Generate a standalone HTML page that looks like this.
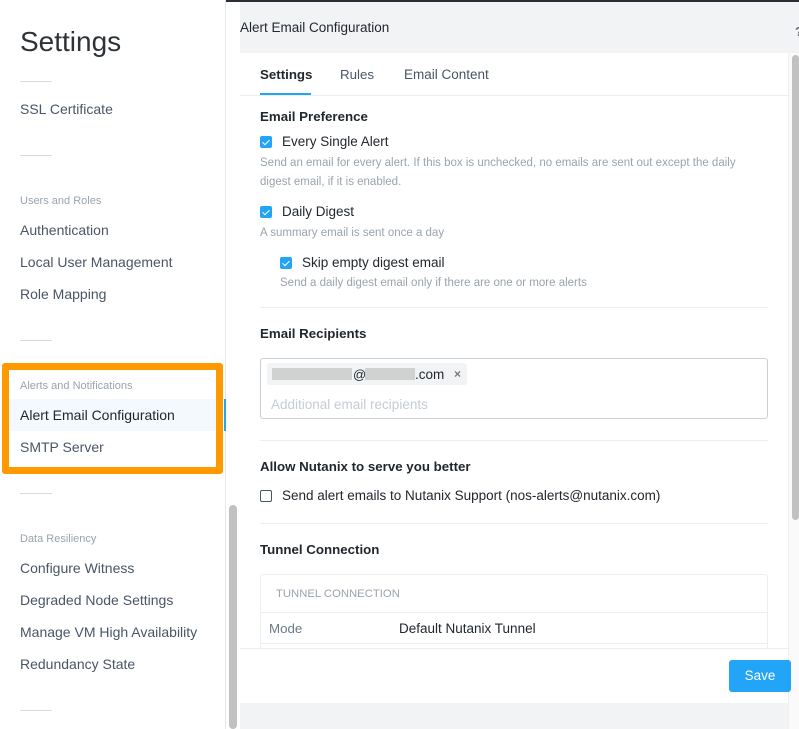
<!DOCTYPE html>
<html><head><style>
*{margin:0;padding:0;box-sizing:border-box}
body{width:799px;height:729px;overflow:hidden;font-family:"Liberation Sans",sans-serif;background:#f2f3f5;position:relative;color:#22272e}
.a{position:absolute;white-space:nowrap}
.side{position:absolute;left:0;top:0;width:226px;height:729px;background:#fff;border-right:1px solid #e6e8eb}
.nav{font-size:14px;color:#4a5565}
.grp{font-size:11px;color:#9aa3ae}
.hr{position:absolute;left:20px;width:32px;height:1px;background:#d7dbe0}
.cb{position:absolute;width:12px;height:12px;border-radius:2px;background:#22a5f7}
.cb:after{content:"";position:absolute;left:4px;top:1.5px;width:3px;height:6px;border:solid #fff;border-width:0 1.6px 1.6px 0;transform:rotate(45deg)}
.t14{font-size:13.5px;color:#22272e}
.h{font-size:13.3px;font-weight:bold;color:#22272e}
.s{font-size:11.5px;color:#9aa3ae}
.line{position:absolute;left:260px;width:508px;height:1px;background:#eceef1}
</style></head><body>
<div class="a" style="left:0;top:0;width:799px;height:2px;background:#2a2f36"></div>
<div class="side">
<div class="a" style="left:20px;top:26px;font-size:28px;color:#2e3338">Settings</div>
<div class="hr" style="top:81px"></div>
<div class="a nav" style="left:20px;top:101px">SSL Certificate</div>
<div class="hr" style="top:155px"></div>
<div class="a grp" style="left:20px;top:195px">Users and Roles</div>
<div class="a nav" style="left:20px;top:222px">Authentication</div>
<div class="a nav" style="left:20px;top:254px">Local User Management</div>
<div class="a nav" style="left:20px;top:286px">Role Mapping</div>
<div class="hr" style="top:340px"></div>
<div class="a" style="left:9px;top:399px;width:216px;height:32px;background:#f3f9fd"></div>
<div class="a" style="left:224px;top:399px;width:2px;height:32px;background:#22a5f7"></div>
<div class="a grp" style="left:20px;top:380px">Alerts and Notifications</div>
<div class="a nav" style="left:20px;top:407px;color:#22272e">Alert Email Configuration</div>
<div class="a nav" style="left:20px;top:439px">SMTP Server</div>
<div class="a" style="left:2px;top:363px;width:221px;height:111px;border:7px solid #ff9900;border-radius:3px"></div>
<div class="hr" style="top:493px"></div>
<div class="a grp" style="left:20px;top:533px">Data Resiliency</div>
<div class="a nav" style="left:20px;top:560px">Configure Witness</div>
<div class="a nav" style="left:20px;top:592px">Degraded Node Settings</div>
<div class="a nav" style="left:20px;top:624px">Manage VM High Availability</div>
<div class="a nav" style="left:20px;top:656px">Redundancy State</div>
<div class="hr" style="top:710px"></div>
</div>
<div class="a" style="left:226px;top:2px;width:14px;height:727px;background:#fff"></div>
<div class="a" style="left:229px;top:505px;width:8px;height:224px;background:#c1c1c1;border-radius:4px"></div>
<div class="a" style="left:240px;top:20px;font-size:13.5px;color:#22272e">Alert Email Configuration</div>
<div class="a" style="left:795px;top:24px;font-size:13px;color:#5a6b80;font-weight:bold">?</div>
<div class="a" style="left:240px;top:53px;width:548px;height:650px;background:#fff;border-radius:0 0 3px 3px"></div>
<div class="a" style="left:788px;top:53px;width:11px;height:676px;background:#fafafa;border-left:1px solid #eee"></div>
<div class="a" style="left:792px;top:55px;width:7px;height:465px;background:#c1c1c1;border-radius:4px"></div>
<div class="a" style="left:260px;top:67px;font-size:13.3px;font-weight:bold;color:#22272e">Settings</div>
<div class="a" style="left:260px;top:93px;width:51px;height:2px;background:#22a5f7"></div>
<div class="a" style="left:340px;top:67px;font-size:13.3px;color:#4a5565">Rules</div>
<div class="a" style="left:404px;top:67px;font-size:13.5px;color:#4a5565">Email Content</div>
<div class="a" style="left:240px;top:95px;width:548px;height:1px;background:#eceef1"></div>
<div class="a h" style="left:260px;top:109px">Email Preference</div>
<div class="cb" style="left:260px;top:136px"></div>
<div class="a t14" style="left:282px;top:134px">Every Single Alert</div>
<div class="a s" style="left:260px;top:157px">Send an email for every alert. If this box is unchecked, no emails are sent out except the daily</div>
<div class="a s" style="left:260px;top:176px">digest email, if it is enabled.</div>
<div class="cb" style="left:260px;top:206px"></div>
<div class="a t14" style="left:282px;top:204px">Daily Digest</div>
<div class="a s" style="left:260px;top:227px">A summary email is sent once a day</div>
<div class="cb" style="left:280px;top:257px"></div>
<div class="a t14" style="left:302px;top:255px">Skip empty digest email</div>
<div class="a s" style="left:280px;top:277px">Send a daily digest email only if there are one or more alerts</div>
<div class="line" style="top:307px"></div>
<div class="a h" style="left:260px;top:326px">Email Recipients</div>
<div class="a" style="left:260px;top:358px;width:508px;height:61px;border:1px solid #c9cfd6;border-radius:3px"></div>
<div class="a" style="left:267px;top:363px;width:200px;height:22px;background:#f1f3f5;border-radius:3px"></div>
<div class="a" style="left:272px;top:368px;width:80px;height:12px;background:#c8c8c8;opacity:.8"></div>
<div class="a" style="left:353px;top:367px;font-size:13px;color:#22272e">@</div>
<div class="a" style="left:365px;top:368px;width:50px;height:12px;background:#c8c8c8;opacity:.8"></div>
<div class="a" style="left:415px;top:367px;font-size:13.5px;color:#22272e">.com</div>
<div class="a" style="left:454px;top:367px;font-size:12px;color:#777;font-weight:bold">×</div>
<div class="a" style="left:271px;top:397px;font-size:13.5px;color:#c6ccd3">Additional email recipients</div>
<div class="line" style="top:440px"></div>
<div class="a h" style="left:260px;top:459px">Allow Nutanix to serve you better</div>
<div class="a" style="left:260px;top:490px;width:12px;height:12px;border:1px solid #4a5565;border-radius:2px"></div>
<div class="a t14" style="left:282px;top:488px">Send alert emails to Nutanix Support (nos-alerts@nutanix.com)</div>
<div class="line" style="top:523px"></div>
<div class="a h" style="left:260px;top:542px">Tunnel Connection</div>
<div class="a" style="left:260px;top:574px;width:508px;height:80px;border:1px solid #eceef1;border-radius:3px"></div>
<div class="a" style="left:276px;top:588px;font-size:11.3px;color:#9aa3ae">TUNNEL CONNECTION</div>
<div class="line" style="top:612px"></div>
<div class="a" style="left:269px;top:621px;font-size:13.3px;color:#6b7a8d">Mode</div>
<div class="a t14" style="left:399px;top:621px">Default Nutanix Tunnel</div>
<div class="line" style="top:643px"></div>
<div class="a" style="left:240px;top:648px;width:548px;height:55px;background:#fff;border-top:1px solid #eceef1"></div>
<div class="a" style="left:729px;top:660px;width:62px;height:32px;background:#22a5f7;border-radius:3px;color:#fff;font-size:13.5px;text-align:center;line-height:32px">Save</div>
</body></html>
